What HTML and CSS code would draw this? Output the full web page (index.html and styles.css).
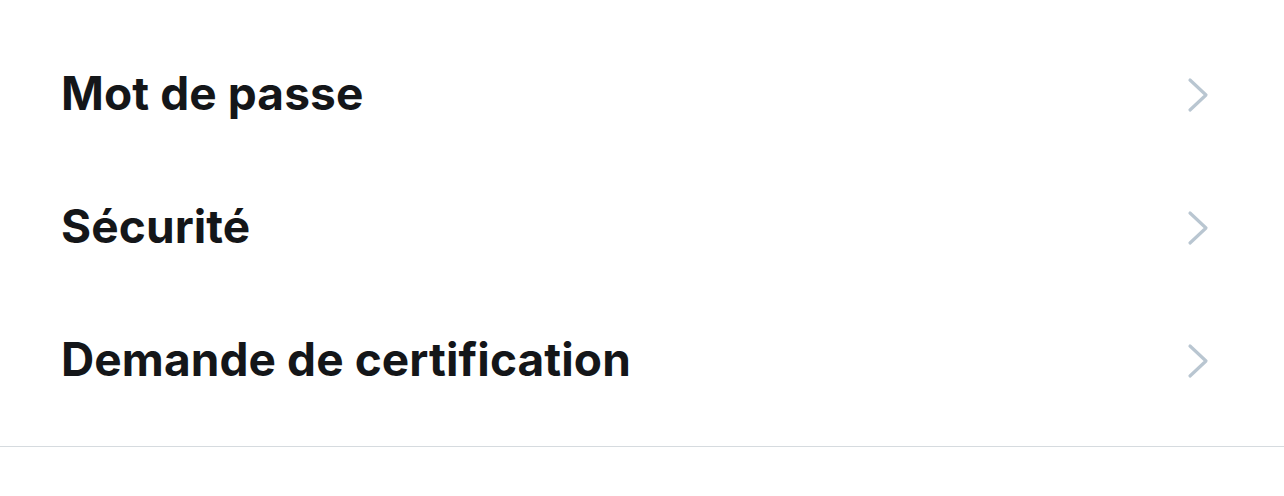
FILE: index.html
```html
<!DOCTYPE html>
<html lang="fr">
<head>
<meta charset="utf-8">
<link rel="stylesheet" href="styles.css">
</head>
<body>
<div class="list">
  <div class="row"><span class="label">Mot de passe</span>
    <svg class="chev" viewBox="0 0 24 36" width="24" height="36"><path d="M3 3 L19 18 L3 33" fill="none" stroke="#b9c6d1" stroke-width="3.2" stroke-linecap="round" stroke-linejoin="round"/></svg>
  </div>
  <div class="row"><span class="label">Sécurité</span>
    <svg class="chev" viewBox="0 0 24 36" width="24" height="36"><path d="M3 3 L19 18 L3 33" fill="none" stroke="#b9c6d1" stroke-width="3.2" stroke-linecap="round" stroke-linejoin="round"/></svg>
  </div>
  <div class="row"><span class="label">Demande de certification</span>
    <svg class="chev" viewBox="0 0 24 36" width="24" height="36"><path d="M3 3 L19 18 L3 33" fill="none" stroke="#b9c6d1" stroke-width="3.2" stroke-linecap="round" stroke-linejoin="round"/></svg>
  </div>
</div>
<div class="divider"></div>
</body>
</html>
```
FILE: styles.css
```css
html, body { margin: 0; padding: 0; background: #fff; }
body { width: 1284px; height: 496px; overflow: hidden; font-family: Inter, "Liberation Sans", sans-serif; }
.list { padding-top: 28px; }
.row { height: 133px; display: flex; align-items: center; justify-content: space-between; padding: 0 73px 0 61px; }
.label { font-size: 46px; font-weight: 700; color: #141619; letter-spacing: 0.1px; line-height: 1; position: relative; top: -2px; }
.chev { display: block; }
.divider { margin-top: 19px; height: 1px; background: #d6dbdf; }
```
